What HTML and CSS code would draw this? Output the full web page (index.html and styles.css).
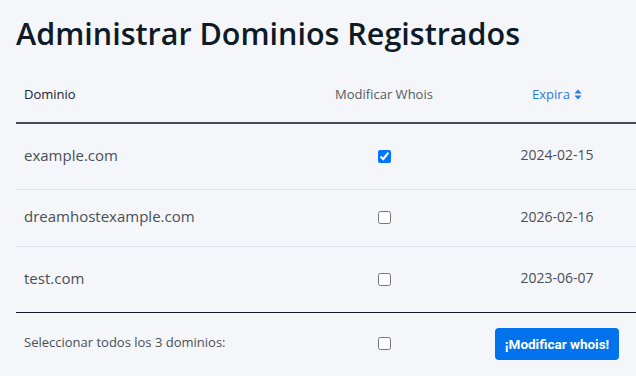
FILE: index.html
```html
<!DOCTYPE html>
<html lang="es">
<head>
<meta charset="utf-8">
<title>Administrar Dominios Registrados</title>
<link rel="stylesheet" href="styles.css">
</head>
<body>
<main class="page">
  <h1 class="title">Administrar Dominios Registrados</h1>
  <table class="domains">
    <colgroup>
      <col class="c-name">
      <col class="c-whois">
      <col class="c-exp">
    </colgroup>
    <thead>
      <tr class="head-row">
        <th class="th-name">Dominio</th>
        <th class="th-whois">Modificar Whois</th>
        <th class="th-exp"><span class="sort">Expira <svg class="sort-icon" width="8" height="11" viewBox="0 0 8 11"><path d="M4 0.5 L7.6 4.4 H0.4 Z M4 10.5 L7.6 6.6 H0.4 Z" fill="#2a7de1"/></svg></span></th>
      </tr>
    </thead>
    <tbody>
      <tr class="row tall">
        <td class="name">example.com</td>
        <td class="check"><input type="checkbox" checked></td>
        <td class="date">2024-02-15</td>
      </tr>
      <tr class="row short">
        <td class="name">dreamhostexample.com</td>
        <td class="check"><input type="checkbox"></td>
        <td class="date">2026-02-16</td>
      </tr>
      <tr class="row tall last">
        <td class="name">test.com</td>
        <td class="check"><input type="checkbox"></td>
        <td class="date">2023-06-07</td>
      </tr>
    </tbody>
    <tfoot>
      <tr class="foot-row">
        <td class="foot-label">Seleccionar todos los 3 dominios:</td>
        <td class="check"><input type="checkbox"></td>
        <td class="foot-action"><button class="btn" type="button">¡Modificar whois!</button></td>
      </tr>
    </tfoot>
  </table>
</main>
</body>
</html>
```

FILE: styles.css
```css
html, body {
  margin: 0;
  padding: 0;
  background: #f4f6fa;
}
body {
  font-family: "Open Sans", "Liberation Sans", sans-serif;
  color: #4a4f57;
}
.page {
  padding: 0 0 0 16px;
}
.title {
  margin: 0;
  padding-top: 13px;
  font-family: "Open Sans", "Liberation Sans", sans-serif;
  font-weight: 600;
  font-size: 30.5px;
  line-height: 40px;
  color: #0e1a26;
  letter-spacing: 0;
}
.domains {
  margin-top: 13px;
  width: 620px;
  border-collapse: collapse;
  table-layout: fixed;
}
.c-name { width: 274px; }
.c-whois { width: 188px; }
.c-exp { width: 158px; }

.head-row th {
  height: 56px;
  padding: 0 8px;
  font-size: 13px;
  font-weight: 400;
  border-bottom: 2px solid #454c55;
}
.th-name {
  text-align: left;
  color: #1a2433;
}
.th-whois {
  text-align: center;
  color: #555b63;
}
.th-exp {
  text-align: center;
  color: #2a7de1;
}
.sort {
  display: inline-flex;
  align-items: center;
  gap: 4px;
}
.row td {
  padding: 0 8px 3px;
  border-bottom: 1px solid #e1e4ea;
}
.row.tall { height: 66px; }
.row.short { height: 57px; }
.row.last td {
  border-bottom: 1px solid #0e1a26;
}
.name {
  font-size: 15px;
  color: #4a4f57;
}
.check {
  text-align: center;
}
.check input {
  margin: 0;
  width: 13px;
  height: 13px;
  vertical-align: middle;
}
.date {
  text-align: center;
  font-size: 14px;
  color: #4a4f57;
}
.foot-row { height: 64px; }
.foot-row td {
  padding: 0 8px 4px;
}
.foot-label {
  font-size: 13px;
  color: #4a4f57;
}
.foot-action {
  text-align: center;
  padding-bottom: 0 !important;
}
.btn {
  font-family: "Roboto", "Liberation Sans", sans-serif;
  font-weight: 700;
  font-size: 13.5px;
  color: #fff;
  background: #0073ec;
  border: none;
  border-radius: 4px;
  height: 32px;
  width: 124px;
  padding: 0;
}
```
